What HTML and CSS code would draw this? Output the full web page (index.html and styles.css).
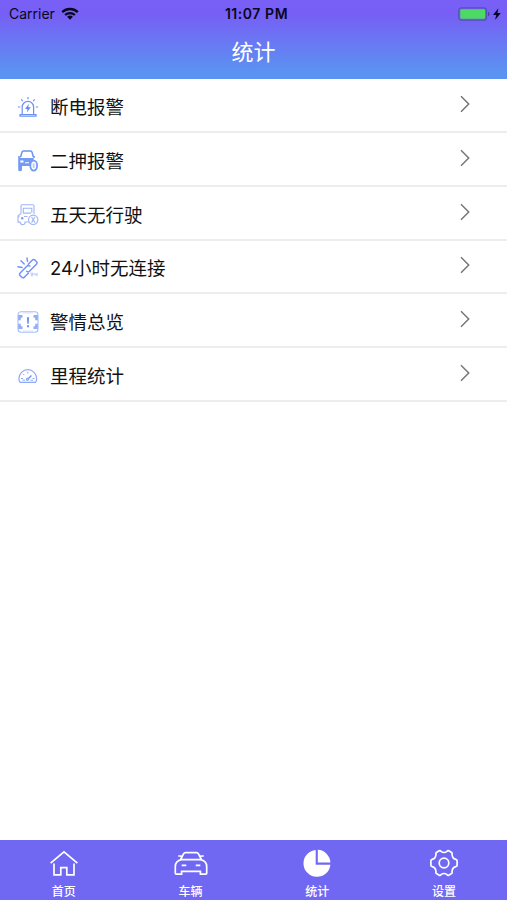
FILE: index.html
```html
<!DOCTYPE html>
<html lang="zh-CN">
<head>
<meta charset="utf-8">
<meta name="viewport" content="width=device-width, initial-scale=1">
<title>统计</title>
<link rel="stylesheet" href="styles.css">
</head>
<body>
<div class="app">
  <header class="header">
    <div class="status">
      <div class="status-left">
        <span class="carrier">Carrier</span>
        <svg class="wifi" viewBox="0 0 18 13" width="18" height="13"><g fill="none" stroke="#080720" stroke-width="2.3"><path d="M1.2 5.1a11.3 11.3 0 0 1 15.6 0"/><path d="M4.1 8a7.2 7.2 0 0 1 9.8 0"/></g><path d="M6.1 9.8a4.3 4.3 0 0 1 5.8 0L9 12.7z" fill="#080720"/></svg>
      </div>
      <span class="time">11:07 PM</span>
      <div class="status-right">
        <svg viewBox="0 0 44 14" width="44" height="14"><rect x=".8" y=".8" width="27.6" height="12.4" rx="2.8" fill="none" stroke="#5551b4" stroke-width="1.2"/><rect x="2.3" y="2.3" width="24.8" height="9.4" rx="1.2" fill="#4cd964"/><path d="M30 4.8q1.5.7 1.5 2.2T30 9.2z" fill="#454399"/><path d="M40.4 1.2 35 7.9h3.3l-1.3 5 5.8-6.8h-3.4z" fill="#080720"/></svg>
      </div>
    </div>
    <h1 class="title">统计</h1>
  </header>

  <main class="list">
    <a class="row">
      <svg class="icon" viewBox="0 0 22 22"><g fill="none" stroke="#6c91f3" stroke-width="1.2"><path d="M5.2 18.8V11a5.7 5.7 0 0 1 11.4 0v7.8M3 20.2h16v-1.7H3zM11 1v2.3M4.2 3.4l1.5 1.8M17.7 3.4l-1.5 1.8M.9 11h2.4M18.7 11h2.4"/></g><path d="M11.8 7.8 8 13h2.5l-.7 3.6 4-5.3h-2.6z" fill="#6389f2"/></svg>
      <span class="label">断电报警</span>
      <svg class="chevron" viewBox="0 0 10 18"><path d="M1 1.2 8.7 9 1 16.8"/></svg>
    </a>
    <a class="row">
      <svg class="icon" viewBox="0 0 22 22"><g fill="none" stroke="#6b90f2" stroke-width="1.5"><path d="M3.6 7 5 2.1Q5.3 1 6.5 1h7q1.2 0 1.5 1.1l1.3 4.7M1 7h2.5M16 7h2"/></g><path d="M1.2 8h15.5v2.6c-2.4.7-3.7 3-3.7 5.5H5v3.6q0 1.6-1.9 1.6t-1.9-1.6z" fill="#759af4"/><path d="M3.3 10.4h3.2v2H3.3zM8 12.2h4v1H8z" fill="#fff"/><ellipse cx="16.7" cy="15.6" rx="3.4" ry="5" fill="#fff" stroke="#759af4" stroke-width="1.8"/><path d="M15.7 13.3h2v4.6h-2z" fill="#bdcefa"/></svg>
      <span class="label">二押报警</span>
      <svg class="chevron" viewBox="0 0 10 18"><path d="M1 1.2 8.7 9 1 16.8"/></svg>
    </a>
    <a class="row">
      <svg class="icon" viewBox="0 0 22 22"><g fill="none" stroke="#9fb7f7" stroke-width="1.1"><path d="M4 9.5V2q0-1.2 1.2-1.2h10.6Q17 .8 17 2v8M6.3 9V4.2h8.5v4.5M6 9.1h8M4 9.5l-3 2.3v6.3h2.2q.3 2.6 2.5 2.6T8.1 18h3.8M1.2 12.8h1.5M7 12.5h3.5"/><circle cx="16.2" cy="15.8" r="4.7"/><path d="m14.6 13 3.3 5.6M17.9 13l-3.3 5.6"/></g><circle cx="5.2" cy="14.3" r="1.2" fill="#7899f3"/></svg>
      <span class="label">五天无行驶</span>
      <svg class="chevron" viewBox="0 0 10 18"><path d="M1 1.2 8.7 9 1 16.8"/></svg>
    </a>
    <a class="row">
      <svg class="icon" viewBox="0 0 22 22"><g fill="none" stroke="#6e94f5" stroke-width="1.45" stroke-linecap="round"><path d="m11.2 7.2 4-4q1.5-1.5 3 0l1.2 1.2q1.4 1.4 0 2.9l-6.7 6.8q-1.5 1.5-3 .2M12.9 9.1q-1.7-1.3-3.1.1l-6.6 6.7q-1.4 1.4 0 2.8l1.4 1.4q1.4 1.4 2.9 0l3.8-3.8M10 1l.5 3.4M4 3.8l3.2 3.1M1 9.7l4 .8"/></g><path d="M13.2 16.2h3v1.4h-2v1.2h2M17.8 16v1.8h2.7M20 15.8v3.4" fill="none" stroke="#b7cafb" stroke-width="1"/></svg>
      <span class="label">24小时无连接</span>
      <svg class="chevron" viewBox="0 0 10 18"><path d="M1 1.2 8.7 9 1 16.8"/></svg>
    </a>
    <a class="row">
      <svg class="icon" viewBox="0 0 22 22"><rect x="1" y=".8" width="20" height="20.4" rx="3" fill="none" stroke="#a8bef9" stroke-width="1.1"/><path d="M1.2 4h4.3v2.8H3.8v2.4H1.2zM20.8 4h-4.3v2.8h1.7v2.4h2.6zM1.2 18h4.3v-2.8H3.8v-2.4H1.2zM20.8 18h-4.3v-2.8h1.7v-2.4h2.6z" fill="#92acf7"/><path d="M6 1h10v1.4H6zM6 19.6h10V21H6z" fill="#dce5fd"/><path d="M9.9 6.2h2.2l-.4 6.6h-1.4zM10 14.2h2v2h-2z" fill="#6e8ff2"/></svg>
      <span class="label">警情总览</span>
      <svg class="chevron" viewBox="0 0 10 18"><path d="M1 1.2 8.7 9 1 16.8"/></svg>
    </a>
    <a class="row">
      <svg class="icon" viewBox="0 0 22 22"><g fill="none" stroke="#8ea9f6" stroke-width="1.2"><path d="M3.1 17.4Q1.9 15.9 1.9 13.6a8.9 8.9 0 0 1 17.8 0q0 2.3-1.2 3.8z"/><path d="M4 13.5h2M15.6 13.5h2M10.8 6.7v1.8M6.1 8.9l1.2 1.2M5.5 15.2h2.6M13.4 15.2h2.8" stroke-width="1"/><path d="m10.6 14.4 3.8-4" stroke="#7194f4" stroke-width="1.4"/><circle cx="10.5" cy="14.3" r="1.1"/></g></svg>
      <span class="label">里程统计</span>
      <svg class="chevron" viewBox="0 0 10 18"><path d="M1 1.2 8.7 9 1 16.8"/></svg>
    </a>
  </main>

  <nav class="tabs">
    <a class="tab">
      <svg viewBox="0 0 34 30" width="34" height="30"><path d="M3.6 15.2 17 3.8l13.4 11.4M7 15.5v11.3h6.8v-7.2h6v7.2H27V15.5"/></svg>
      <span>首页</span>
    </a>
    <a class="tab">
      <svg viewBox="0 0 34 30" width="34" height="30"><path d="M6.4 12 9.5 6q.6-1.3 2-1.3h11q1.4 0 2 1.3l3.1 6M4.2 8h2.7l.7 1.3M29.8 8h-2.7l-.7 1.3M7.5 11.7h19q6.2 1.2 6.2 7v6.6q0 .8-.8.8h-5.5v-2.8H7.6v2.8H2.1q-.8 0-.8-.8v-6.6q0-5.8 6.2-7zM7.7 17.3h4.6M21.7 17.3h4.6"/></svg>
      <span>车辆</span>
    </a>
    <a class="tab">
      <svg viewBox="0 0 34 30" width="34" height="30"><g fill="#fff" stroke="none"><path d="M15.7 1.9v14.8h14.7A13.5 13.5 0 1 1 15.7 1.9z"/><path d="M17.8 1.8A13.4 13.4 0 0 1 30.4 14.4H17.8z"/></g></svg>
      <span>统计</span>
    </a>
    <a class="tab">
      <svg viewBox="0 0 34 30" width="34" height="30"><path d="M12.2 2.8Q13.4 2.3 14 3.4Q17 5.6 20 3.4Q20.6 2.3 21.8 2.8L24.6 4.4Q25.6 5 25 6.2Q25.2 10.4 28.8 11.4Q30.1 11.5 30.1 12.8V17.2Q30.1 18.5 28.8 18.6Q25.2 19.6 25 23.8Q25.6 25 24.6 25.6L21.8 27.2Q20.6 27.7 20 26.6Q17 24.4 14 26.6Q13.4 27.7 12.2 27.2L9.4 25.6Q8.4 25 9 23.8Q8.8 19.6 5.2 18.6Q3.9 18.5 3.9 17.2V12.8Q3.9 11.5 5.2 11.4Q8.8 10.4 9 6.2Q8.4 5 9.4 4.4Z" stroke-linejoin="round"/><circle cx="17" cy="15" r="4.8"/></svg>
      <span>设置</span>
    </a>
  </nav>
</div>
</body>
</html>
```
FILE: styles.css
```css
* {
  box-sizing: border-box;
}

body {
  margin: 0;
  background: #fff;
  font-family: Inter, "Noto Sans CJK SC", sans-serif;
}

.app {
  display: flex;
  flex-direction: column;
  height: 900px;
}

.header {
  height: 79.2px;
  background: linear-gradient(#795ff7 0%, #775ff5 18%, #5a93f1 92%, #5a93f1 100%);
}

.status {
  display: grid;
  grid-template-columns: 1fr auto 1fr;
  align-items: center;
  height: 27px;
  padding: 0 5px 0 9px;
  color: #080720;
}

.status-left {
  display: flex;
  align-items: center;
  gap: 6px;
}

.carrier {
  font-size: 14px;
}

.wifi {
  margin-top: -1px;
}

.time {
  margin-left: 2px;
  font-size: 14px;
  font-weight: 600;
  letter-spacing: 0.55px;
}

.status-right {
  display: flex;
  justify-content: flex-end;
}

.title {
  margin: 0;
  height: 50px;
  line-height: 51px;
  color: #fff;
  font-size: 22px;
  font-weight: 400;
  text-align: center;
}

.list {
  flex: 1;
}

.row {
  display: flex;
  align-items: center;
  height: 53.8px;
  padding: 4px 37px 0 17px;
  border-bottom: 2px solid #ededee;
}

.icon {
  width: 22px;
  height: 22px;
}

.label {
  flex: 1;
  margin-left: 11px;
  color: #111;
  font-size: 18.5px;
  line-height: 28px;
}

.chevron {
  width: 10px;
  height: 18px;
  margin-top: -6px;
  fill: none;
  stroke: #777;
  stroke-width: 1.5;
}

.tabs {
  display: grid;
  grid-template-columns: repeat(4, 1fr);
  height: 60px;
  background: #7068f2;
}

.tab {
  display: flex;
  flex-direction: column;
  align-items: center;
  padding: 8px 0 0 1px;
  color: #fff;
  font-size: 12px;
  font-weight: 500;
  line-height: 18px;
}

.tab svg {
  fill: none;
  stroke: #fff;
  stroke-width: 1.7;
  margin-bottom: 5px;
}
```
